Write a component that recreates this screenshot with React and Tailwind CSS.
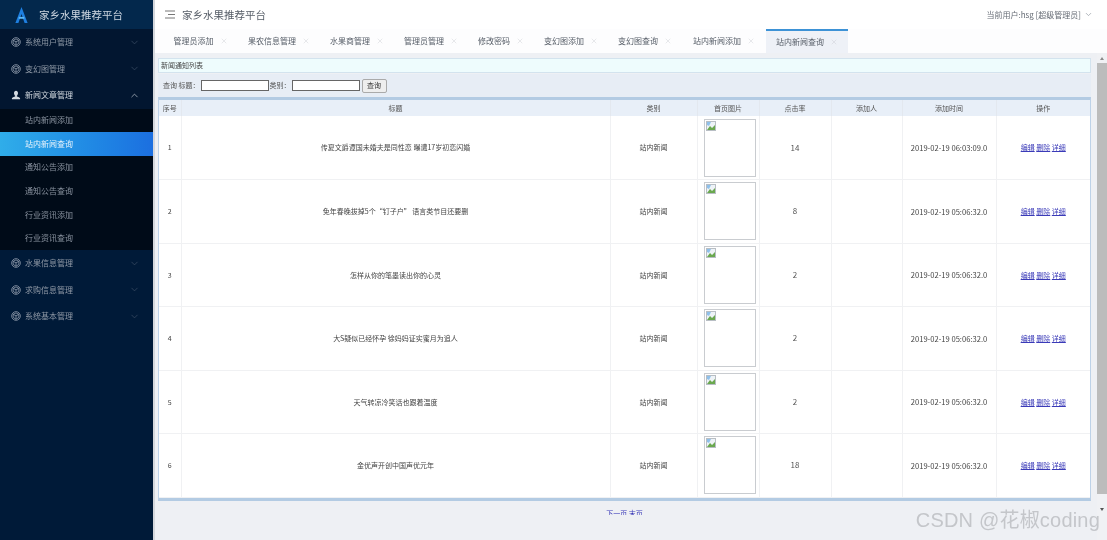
import React from "react";
import { ChevronDown, ChevronUp, X } from "lucide-react";

const font = { fontFamily: '"Noto Sans CJK SC", "Liberation Sans", sans-serif' };

function Cube() {
  return (
    <svg width="10" height="10" viewBox="0 0 12 12" fill="none" stroke="#8b98a8" strokeWidth="1" className="shrink-0">
      <circle cx="6" cy="6" r="5.2" />
      <path d="M2.600 4 6 2.300 9.400 4 6 5.800Z M6 5.800V10 M2.600 4v3.600L6 10l3.400-2.400V4" />
    </svg>
  );
}

function UserIcon() {
  return (
    <svg width="10" height="10" viewBox="0 0 12 12" fill="#d5dbe2" className="shrink-0">
      <path d="M6 .8c1.500 0 2.400 1.200 2.400 2.800S7.500 6.600 7 7v.9c1.600.5 3.700 1 3.900 2.100v1H1.100v-1c.2-1.100 2.300-1.600 3.900-2.100V7c-.5-.4-1.400-1.800-1.400-3.400S4.500.8 6 .8Z" />
    </svg>
  );
}

function Group({ label, icon, open }) {
  return (
    <div className="flex h-[26.500px] items-center pl-[11px] pr-[13px]">
      {icon === "user" ? <UserIcon /> : <Cube />}
      <span className={`ml-[4px] flex-1 text-[8px] ${open ? "text-[#d0d6dd]" : "text-[#8f99a6]"}`}>{label}</span>
      {open ? (
        <ChevronUp size={11} color="#c5ccd4" strokeWidth={1.5} />
      ) : (
        <ChevronDown size={11} color="#3f5068" strokeWidth={1.5} />
      )}
    </div>
  );
}

function SubItem({ label, active }) {
  return (
    <div
      className={`flex h-[23.600px] items-center pl-[25px] text-[8px] ${
        active ? "bg-gradient-to-r from-[#30ade9] to-[#1c6fe0] text-[#e8f3fc]" : "text-[#8a94a1]"
      }`}
    >
      {label}
    </div>
  );
}

function Sidebar() {
  return (
    <aside className="flex h-full w-[153px] shrink-0 flex-col bg-[#001a38]">
      <div className="flex h-[29px] items-center bg-[#03284c] pl-[15px]">
        <svg width="13" height="16" viewBox="0 0 13 17">
          <path d="M6.500 0 13 17H9.800L6.500 7.500 3.200 17H0Z" fill="#1e7fe0" />
          <rect x="3.500" y="10.500" width="6" height="2" fill="#5bb8f5" />
        </svg>
        <span className="ml-[11px] text-[10.500px] text-[#cfd8e2]">家乡水果推荐平台</span>
      </div>
      <div className="bg-[#021630]">
        <Group label="系统用户管理" />
        <Group label="变幻图管理" />
        <Group label="新闻文章管理" icon="user" open />
      </div>
      <div className="bg-[#000b18]">
        <SubItem label="站内新闻添加" />
        <SubItem label="站内新闻查询" active />
        <SubItem label="通知公告添加" />
        <SubItem label="通知公告查询" />
        <SubItem label="行业资讯添加" />
        <SubItem label="行业资讯查询" />
      </div>
      <Group label="水果信息管理" />
      <Group label="求购信息管理" />
      <Group label="系统基本管理" />
    </aside>
  );
}

const tabs = [
  ["管理员添加", 75],
  ["果农信息管理", 82],
  ["水果商管理", 74],
  ["管理员管理", 74],
  ["修改密码", 66],
  ["变幻图添加", 74],
  ["变幻图查询", 74],
  ["站内新闻添加", 84],
  ["站内新闻查询", 82],
];

function Tabs() {
  return (
    <div className="flex h-[24px] items-stretch bg-[#fdfdfe] pl-[8px]">
      {tabs.map(([t, w], i) => {
        const active = i === tabs.length - 1;
        return (
          <div
            key={t}
            style={{ width: w }}
            className={`flex items-center justify-center gap-[6px] whitespace-nowrap text-[8px] text-[#555c66] ${
              active ? "border-t-2 border-[#3d92d6] bg-[#eef1f7]" : ""
            }`}
          >
            <span>{t}</span>
            <X size={8} color="#c4c8ce" strokeWidth={1.2} />
          </div>
        );
      })}
    </div>
  );
}

const rows = [
  ["1", "传夏文爵谭国未婚夫是同性恋 曝遭17岁初恋闪婚", "14", "2019-02-19 06:03:09.0"],
  ["2", "免年春晚拔掉5个“钉子户” 语言类节目还要删", "8", "2019-02-19 05:06:32.0"],
  ["3", "怎样从你的笔墨读出你的心灵", "2", "2019-02-19 05:06:32.0"],
  ["4", "大S疑似已经怀孕 徐妈妈证实蜜月为追人", "2", "2019-02-19 05:06:32.0"],
  ["5", "天气转凉冷笑话也跟着温度", "2", "2019-02-19 05:06:32.0"],
  ["6", "金优声开创中国声优元年", "18", "2019-02-19 05:06:32.0"],
];

function BrokenImage() {
  return (
    <div className="ml-[6px] h-[58px] w-[52px] border border-[#c9ccd0] bg-white p-[1px]">
      <svg width="10" height="10" viewBox="0 0 10 10" className="block">
        <rect x="0.500" y="0.500" width="9" height="9" fill="#eef3f7" stroke="#b8bec4" />
        <path d="M1 9 4 5l2 2 3-3v5Z" fill="#6aa84f" />
        <path d="M1 1h4L3 5 1 4Z" fill="#8fc0ea" />
      </svg>
    </div>
  );
}

function NewsTable() {
  const th = "border-r border-[#e3e8ef] font-normal text-[7px] text-[#555] last:border-r-0";
  const td = "border-r border-b border-[#f0f1f3] text-center last:border-r-0 p-0";
  return (
    <table className="w-full table-fixed border-collapse bg-white">
      <colgroup>
        <col className="w-[22px]" />
        <col className="w-[429px]" />
        <col className="w-[87px]" />
        <col className="w-[62px]" />
        <col className="w-[72px]" />
        <col className="w-[71px]" />
        <col className="w-[94px]" />
        <col />
      </colgroup>
      <thead>
        <tr className="h-[16px] bg-[#e8eff8]">
          {["序号", "标题", "类别", "首页图片", "点击率", "添加人", "添加时间", "操作"].map((h) => (
            <th key={h} className={th}>
              {h}
            </th>
          ))}
        </tr>
      </thead>
      <tbody>
        {rows.map(([n, title, hits, time]) => (
          <tr key={n} className="h-[63.500px]">
            <td className={`${td} text-[7px] text-[#444]`}>{n}</td>
            <td className={`${td} text-[7px] text-[#444]`}>{title}</td>
            <td className={`${td} text-[7px] text-[#444]`}>站内新闻</td>
            <td className={td}>
              <BrokenImage />
            </td>
            <td className={`${td} text-[8px] text-[#555]`}>{hits}</td>
            <td className={td}></td>
            <td className={`${td} text-[7.600px] text-[#444]`}>{time}</td>
            <td className={`${td} text-[7px] text-[#3a3ab8]`}>
              <a className="underline">编辑</a> <a className="underline">删除</a> <a className="underline">详细</a>
            </td>
          </tr>
        ))}
      </tbody>
    </table>
  );
}

function Scrollbar() {
  return (
    <div className="flex w-[10px] shrink-0 flex-col items-center bg-[#f0f1f4]">
      <div className="flex h-[10px] items-center justify-center">
        <div className="h-0 w-0 border-x-[2px] border-b-[3px] border-x-transparent border-b-[#8a8a8a]" />
      </div>
      <div className="h-[431px] w-full bg-[#bcbcbc]" />
      <div className="mt-[14px] h-0 w-0 border-x-[2px] border-t-[3px] border-x-transparent border-t-[#555]" />
    </div>
  );
}

export default function App() {
  return (
    <div style={font} className="relative flex h-[540px] w-[1107px] overflow-hidden bg-[#eef0f4] blur-[0.4px]">
      <Sidebar />
      <div className="w-[2px] shrink-0 bg-[#d4d7dc]" />
      <main className="flex min-w-0 flex-1 flex-col">
        <header className="flex h-[29px] items-center bg-white pl-[10px] pr-[14px]">
          <svg width="10" height="9" viewBox="0 0 10 9" fill="none" stroke="#777" strokeWidth="1">
            <path d="M0 1h10M3 4.500h7M0 8h10" />
          </svg>
          <span className="ml-[7px] flex-1 text-[10.500px] text-[#555c66]">家乡水果推荐平台</span>
          <span className="text-[8px] text-[#666c75]">当前用户:hsg [超级管理员]</span>
          <ChevronDown size={9} color="#9aa0a8" className="ml-[3px]" />
        </header>
        <Tabs />
        <div className="flex min-h-0 flex-1">
          <div className="min-w-0 flex-1 pl-[3px] pr-[6px] pt-[5px]">
            <div className="flex h-[15px] items-center border border-[#d3e3ee] bg-[#eefcfd] pl-[2px] text-[7px] text-[#444]">
              新闻通知列表
            </div>
            <div className="mt-[1px] flex h-[23px] items-center gap-[1px] bg-[#e7edf5] pl-[5px] text-[7px] text-[#555]">
              <span>查询 标题：</span>
              <input className="h-[11px] w-[68px] border border-[#666] bg-white" />
              <span>类别：</span>
              <input className="h-[11px] w-[68px] border border-[#666] bg-white" />
              <button className="ml-[1px] h-[14px] w-[25px] rounded-[2px] border border-[#aaa] bg-[#eeeeee] text-[7px] text-[#333]">
                查询
              </button>
            </div>
            <div className="border-x border-y-[3px] border-x-[#bdd2e8] border-y-[#b3cbe3]">
              <NewsTable />
            </div>
            <div className="mt-[7px] h-[7px] overflow-hidden text-center text-[7px] leading-[10px] text-[#3a3ab8]">
              下一页 末页
            </div>
          </div>
          <Scrollbar />
        </div>
      </main>
      <div
        style={{ fontFamily: '"Liberation Sans", "Noto Sans CJK SC", sans-serif' }}
        className="absolute bottom-[10px] right-[7px] text-[20px] leading-none tracking-[0.2px] text-[#c4c6ca]"
      >
        CSDN @花椒coding
      </div>
    </div>
  );
}
